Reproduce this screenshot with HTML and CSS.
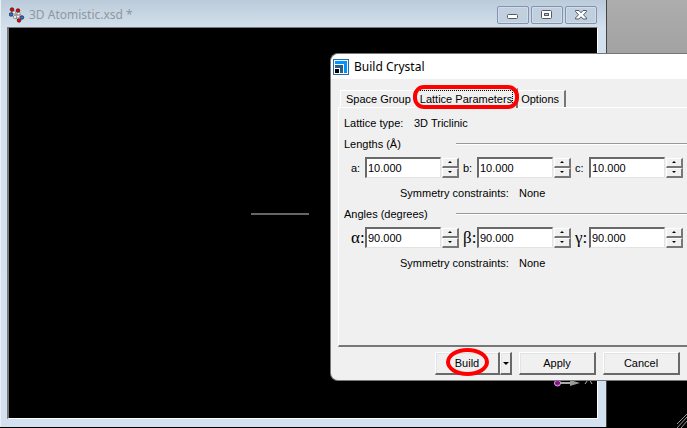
FILE: index.html
```html
<!DOCTYPE html>
<html lang="en">
<head>
<meta charset="utf-8">
<title>Build Crystal</title>
<link rel="stylesheet" href="styles.css">
</head>
<body>
<main class="desktop">
  <section class="doc-window">
    <header class="doc-title">
      <svg class="doc-icon" width="16" height="16" viewBox="0 0 16 16" aria-hidden="true">
        <path d="M3 3 2 8 7 11 10 14 14 11 10 6 8 3M7 11 10 6M5 6 11 10" fill="none" stroke="#888" stroke-width="1"/>
        <g fill="#f4f4f4" stroke="#666" stroke-width=".6"><circle cx="5" cy="5.500" r="1.600"/><circle cx="9.500" cy="6.500" r="1.600"/><circle cx="6" cy="10" r="1.600"/><circle cx="9" cy="9.500" r="1.600"/></g>
        <g stroke="#300" stroke-width=".6"><circle cx="3" cy="2.500" r="1.800" fill="#f00010"/><circle cx="9" cy="3.500" r="1.800" fill="#f00010"/><circle cx="10" cy="13.500" r="1.800" fill="#f00010"/><circle cx="2" cy="7.500" r="1.800" fill="#1878e8"/><circle cx="13" cy="10.500" r="1.800" fill="#1878e8"/></g>
      </svg>
      <h1 class="doc-name">3D Atomistic.xsd *</h1>
      <div class="win-buttons">
        <button class="win-button" aria-label="Minimize"><svg width="12" height="10" viewBox="0 0 12 10"><rect x=".5" y="4.500" width="10" height="4" rx="1" fill="#fff" stroke="#555866"/></svg></button>
        <button class="win-button" aria-label="Maximize"><svg width="12" height="10" viewBox="0 0 12 10"><rect x=".5" y=".5" width="10" height="8" rx="1" fill="#fff" stroke="#555866"/><rect x="3.500" y="3.500" width="4" height="2" fill="#b9cada" stroke="#555866"/></svg></button>
        <button class="win-button" aria-label="Close"><svg width="12" height="10" viewBox="0 0 12 10"><path d="M.5.500H4L6 2.800 8 .5h3.500v1L8.500 4.800l3 3.200v1H8L6 6.800 4 9H.5V8l3-3.200-3-3.300Z" fill="#fff" stroke="#555866"/></svg></button>
      </div>
    </header>
    <div class="viewport">
      <div class="lattice-line"></div>
      <svg class="axes" width="40" height="14" viewBox="0 0 40 14" aria-hidden="true">
        <path d="M6 7h16" stroke="#aaa" stroke-width="2"/><path d="M17 4 27 7 17 10Z" fill="#999"/>
        <circle cx="4.500" cy="7" r="3" fill="#b010b0" stroke="#ddaadd"/><path d="M2 7h5" stroke="#402040"/>
        <path d="M32 8 34.500 4.500H37L39 8" fill="none" stroke="#aaa"/>
      </svg>
    </div>
  </section>
  <svg class="size-grip" width="10" height="14" viewBox="0 0 10 14" aria-hidden="true"><path d="M0 14 10 3M4 14l6-7M0 10 10 0" stroke="#999"/></svg>

  <section class="dialog">
    <header class="dialog-title">
      <svg width="16" height="16" viewBox="0 0 16 16" aria-hidden="true">
        <rect x=".5" y=".5" width="15" height="15" fill="#fff" stroke="#276cae"/>
        <path d="M2 2h12v12h-3V5H2Z" fill="#0094ff"/>
        <path d="M2 6h8v8H7V9H2Z" fill="#24618f"/><path d="M2 10h4v4H2Z" fill="#000"/>
      </svg>
      <h2 class="dialog-name">Build Crystal</h2>
    </header>
    <div class="dialog-body">
      <div class="tabs" role="tablist">
        <button class="tab" role="tab">Space Group</button>
        <button class="tab tab-active" role="tab" aria-selected="true"><span class="tab-focus">Lattice Parameters</span><span class="mark mark-tab"></span></button>
        <button class="tab" role="tab">Options</button>
      </div>
      <div class="panel" role="tabpanel">
        <div class="type-row"><span>Lattice type:</span><span>3D Triclinic</span></div>
        <div class="group-head"><span>Lengths (Å)</span><i class="rule"></i></div>
        <div class="fields">
          <div class="field"><label for="a">a:</label><input id="a" value="10.000"><span class="spin"><button class="step up" aria-label="Increase a"></button><button class="step down" aria-label="Decrease a"></button></span></div>
          <div class="field"><label for="b">b:</label><input id="b" value="10.000"><span class="spin"><button class="step up" aria-label="Increase b"></button><button class="step down" aria-label="Decrease b"></button></span></div>
          <div class="field"><label for="c">c:</label><input id="c" value="10.000"><span class="spin"><button class="step up" aria-label="Increase c"></button><button class="step down" aria-label="Decrease c"></button></span></div>
        </div>
        <div class="constraints"><span>Symmetry constraints:</span><span>None</span></div>
        <div class="group-head"><span>Angles (degrees)</span><i class="rule"></i></div>
        <div class="fields greek">
          <div class="field"><label for="alpha">α:</label><input id="alpha" value="90.000"><span class="spin"><button class="step up" aria-label="Increase alpha"></button><button class="step down" aria-label="Decrease alpha"></button></span></div>
          <div class="field"><label for="beta">β:</label><input id="beta" value="90.000"><span class="spin"><button class="step up" aria-label="Increase beta"></button><button class="step down" aria-label="Decrease beta"></button></span></div>
          <div class="field"><label for="gamma">γ:</label><input id="gamma" value="90.000"><span class="spin"><button class="step up" aria-label="Increase gamma"></button><button class="step down" aria-label="Decrease gamma"></button></span></div>
        </div>
        <div class="constraints"><span>Symmetry constraints:</span><span>None</span></div>
      </div>
      <footer class="actions">
        <div class="split">
          <button class="push build">Build<span class="mark mark-build"></span></button>
          <button class="push more" aria-label="Build options"></button>
        </div>
        <button class="push">Apply</button>
        <button class="push">Cancel</button>
      </footer>
    </div>
  </section>
</main>
</body>
</html>
```
FILE: styles.css
```css
* { box-sizing: border-box; }
body { margin: 0; background: #000; }
button, input { font: inherit; color: inherit; margin: 0; padding: 0; border-radius: 0; }
h1, h2 { margin: 0; font-weight: 400; }

.desktop {
  position: relative;
  height: 100vh;
  overflow: hidden;
  background: linear-gradient(#adadad, #a2a2a2 54px, #000 54px);
  font: 11px/16px "Liberation Sans", Arial, sans-serif;
  color: #000;
  white-space: nowrap;
}

/* Document window */
.doc-window {
  position: absolute;
  inset: 0 80px 1px 0;
  display: flex;
  flex-direction: column;
  padding: 0 8px 8px 6px;
  border-left: 1px solid #e9f0f6;
  border-right: 1px solid #444;
  background: linear-gradient(#bccbd9, #d3e1ee 28px, #d3e1f0);
}
.doc-title { display: flex; align-items: center; gap: 4px; height: 27px; padding: 3px 1px 0 2px; }
.doc-name { flex: 1; font: 12px/16px "Noto Sans", sans-serif; color: #8f979f; }
.win-buttons { display: flex; gap: 2px; }
.win-button {
  display: flex;
  align-items: center;
  justify-content: center;
  width: 32px;
  height: 18px;
  border: 1px solid #8492b0;
  border-radius: 2px;
  background: #c1d0de;
  box-shadow: inset 0 0 0 1px #d0dce8;
}
.viewport {
  position: relative;
  flex: 1;
  border: 1px solid;
  border-width: 1px 1px 1px 2px;
  border-color: #777 #fff #fff #777;
  background: #000;
}
.lattice-line { position: absolute; left: 242px; top: 185px; width: 58px; height: 2px; background: #666; }
.axes { position: absolute; right: 4px; bottom: 28px; }
.size-grip { position: absolute; right: 0; bottom: 0; }

/* Dialog */
.dialog {
  position: absolute;
  left: 330px;
  right: 0;
  top: 53px;
  border: 1px solid #777;
  border-width: 1px 0 1px 1px;
  border-radius: 8px 0 0 8px;
  background: #f0f0f0;
}
.dialog-title {
  display: flex;
  align-items: center;
  gap: 5px;
  height: 25px;
  padding-left: 2px;
  border-radius: 8px 0 0 0;
  background: #fff;
}
.dialog-name { font: 12px/16px "Noto Sans", sans-serif; }
.dialog-body { padding: 9px 0 5px 7px; }

.tabs { display: flex; align-items: flex-end; height: 19px; padding-left: 2px; }
.tab {
  position: relative;
  height: 17px;
  padding: 0 3px 0 5px;
  border: solid;
  border-width: 1px 2px 0 1px;
  border-color: #fff #777 #fff #fff;
  background: #f0f0f0;
}
.tab:first-child { border-right: 0; }
.tab:last-child { padding: 0 5px 0 3px; border-left: 0; }
.tab-active { height: 20px; margin-bottom: -1px; z-index: 1; }
.tab-focus { display: block; height: 17px; border: 1px dotted #000; border-width: 1px 1px 0 0; }
.mark { position: absolute; border: 4px solid #f00; pointer-events: none; }
.mark-tab { inset: -4px -3px -1px -2px; border-radius: 11px; }
.mark-build { inset: -5px 9px -3px 10px; border-radius: 50%; }

.panel {
  display: flex;
  flex-direction: column;
  height: 240px;
  padding: 7px 3px 0 5px;
  border: solid;
  border-width: 1px 0 2px 1px;
  border-color: #fff #fff #777 #fff;
}
.type-row { display: grid; grid-template-columns: 70px 1fr; margin-bottom: 5px; }
.group-head { display: grid; grid-template-columns: 112px 1fr; align-items: center; margin-right: -3px; }
.rule { height: 2px; border-top: 1px solid #999; border-bottom: 1px solid #fff; }
.fields { display: flex; gap: 4px; margin: 5px 0 7px 7px; }
.field { display: grid; grid-template-columns: 14px 76px 18px; align-items: center; }
.field input {
  width: 76px;
  height: 21px;
  padding: 0 0 1px 1px;
  border: solid;
  border-width: 2px 1px 1px 2px;
  border-color: #696969 #e3e3e3 #e3e3e3 #696969;
  background: #fff;
  outline: 0;
}
.greek label { font: 17px/20px "Liberation Serif", serif; }
.spin { display: flex; flex-direction: column; padding-left: 1px; }
.step {
  display: flex;
  align-items: center;
  justify-content: center;
  height: 10px;
  border: solid;
  border-width: 1px 2px 2px 1px;
  border-color: #fff #777 #777 #fff;
  background: #f0f0f0;
}
.step::before { content: ""; border: solid transparent; border-width: 0 2px; }
.up::before { border-bottom: 2px solid #000; }
.down::before { border-top: 2px solid #000; }
.constraints { display: grid; grid-template-columns: 119px 1fr; padding-left: 56px; margin: 0 0 5px; }

.actions { display: flex; justify-content: flex-end; gap: 7px; padding: 5px 7px 0 0; }
.split { display: flex; }
.push {
  position: relative;
  width: 77px;
  height: 23px;
  border: solid;
  border-width: 1px 2px 2px 1px;
  border-color: #fff #696969 #696969 #fff;
  background: #f0f0f0;
  box-shadow: inset 1px 1px #e3e3e3;
}
.build { width: 65px; }
.more { display: flex; align-items: center; justify-content: center; width: 12px; }
.more::before { content: ""; border: 3px solid transparent; border-top-color: #000; border-bottom: 0; }
```
